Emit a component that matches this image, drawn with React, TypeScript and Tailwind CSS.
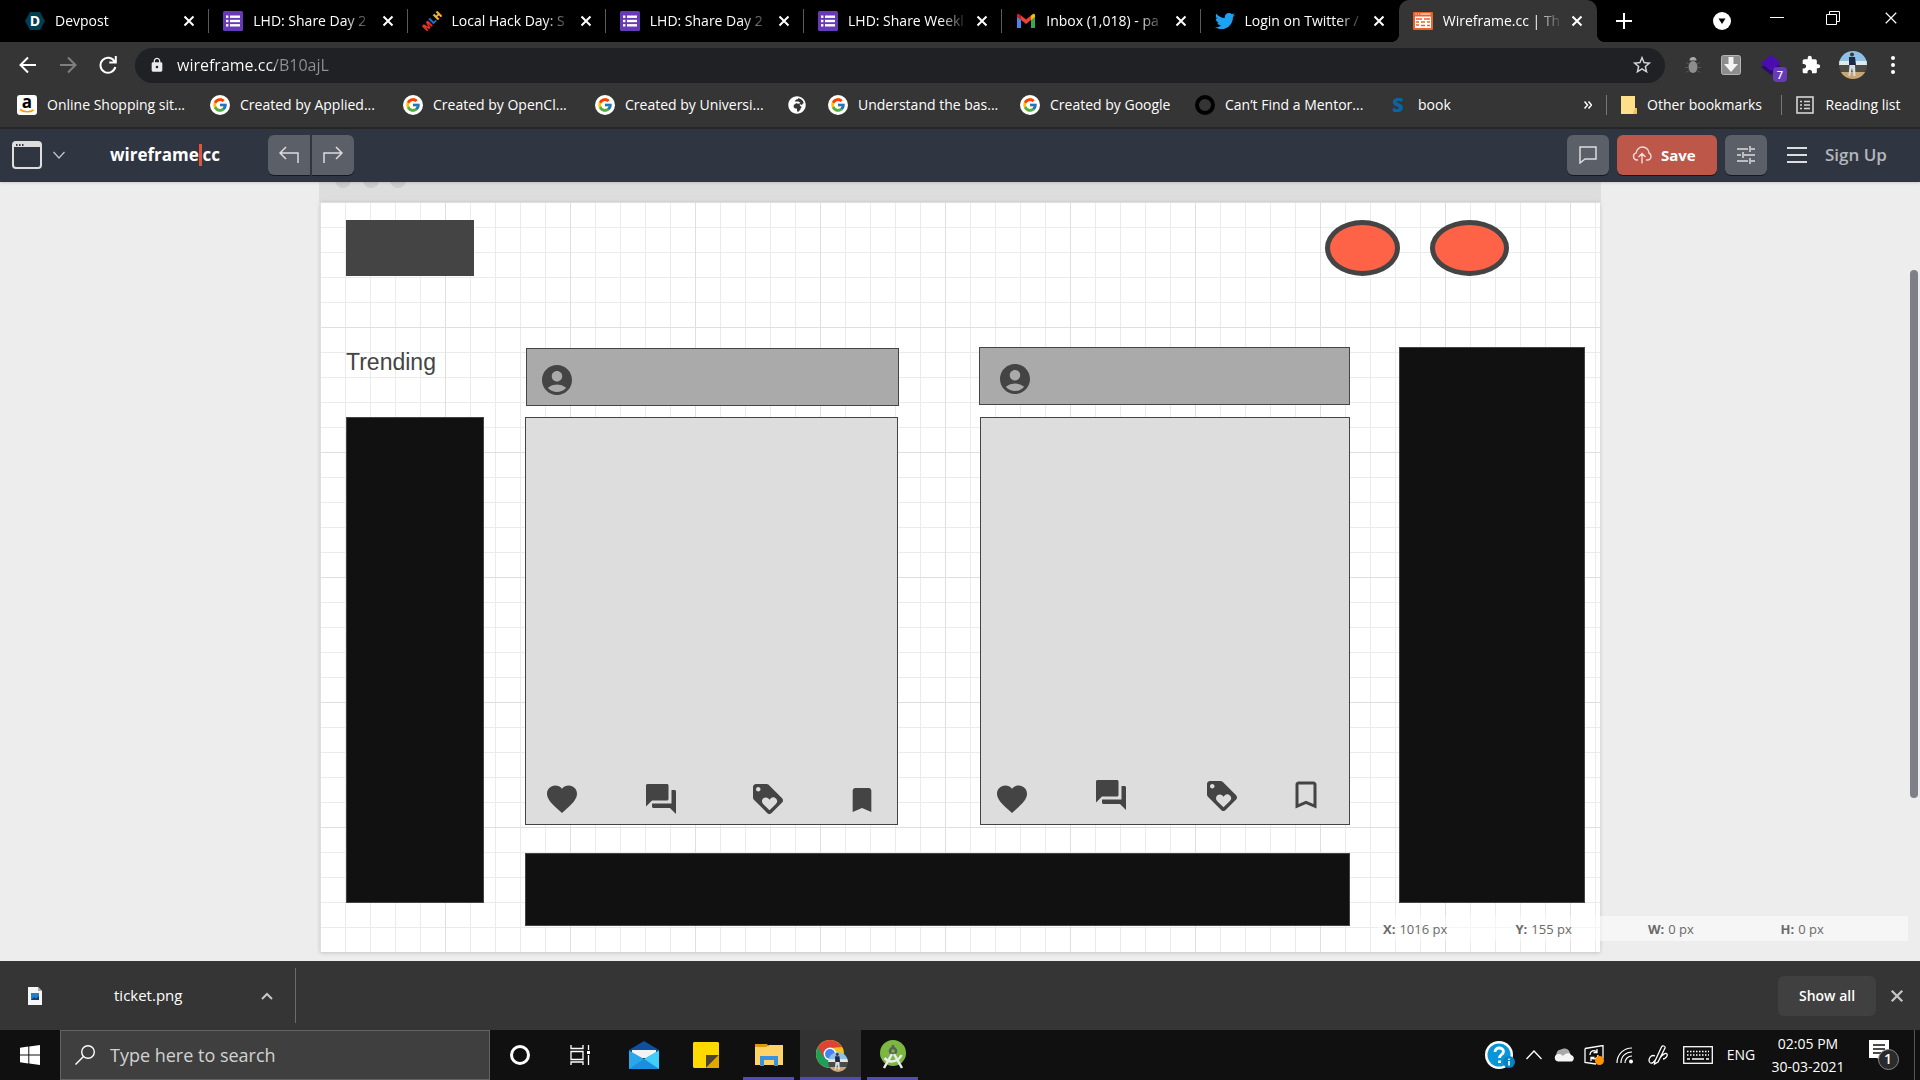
import type { ReactNode } from "react";
import { FcGoogle } from "react-icons/fc";
import { FaGlobeAfrica, FaTwitter } from "react-icons/fa";
import {
  MdAccountCircle,
  MdBookmark,
  MdBookmarkBorder,
  MdExtension,
  MdFavorite,
  MdForum,
  MdLock,
  MdLoyalty,
  MdStarBorder,
} from "react-icons/md";

/* ---------- favicons ---------- */

function DevpostIcon() {
  return (
    <svg viewBox="0 0 20 20" className="size-5">
      <path d="M5 1h10l5 9-5 9H5l-5-9z" fill="#003e54" />
      <text x="10" y="15" textAnchor="middle" fontSize="14" fontWeight="700" fill="#fff" fontFamily="Open Sans, sans-serif">
        D
      </text>
    </svg>
  );
}

function FormsIcon() {
  return (
    <svg viewBox="0 0 20 20" className="size-5">
      <rect width="20" height="20" rx="1.5" fill="#673ab7" />
      <g fill="#fff">
        <rect x="3" y="4.5" width="2.4" height="2.4" />
        <rect x="3" y="8.8" width="2.4" height="2.4" />
        <rect x="3" y="13.1" width="2.4" height="2.4" />
        <rect x="7" y="4.5" width="10" height="2.4" />
        <rect x="7" y="8.8" width="10" height="2.4" />
        <rect x="7" y="13.1" width="10" height="2.4" />
      </g>
    </svg>
  );
}

function MlhIcon() {
  return (
    <svg viewBox="0 0 20 20" className="size-5">
      <text
        x="10"
        y="13.5"
        textAnchor="middle"
        fontSize="10"
        fontWeight="800"
        fontFamily="Open Sans, sans-serif"
        transform="rotate(-45 10 10)"
      >
        <tspan fill="#e73427">M</tspan>
        <tspan fill="#1d6fcf">L</tspan>
        <tspan fill="#f8b92a">H</tspan>
      </text>
    </svg>
  );
}

function GmailIcon() {
  return (
    <svg viewBox="0 0 20 20" className="size-5">
      <path d="M1 17V5l4 3v9z" fill="#4285f4" />
      <path d="M15 17V8l4-3v12z" fill="#34a853" />
      <path d="M15 4.500 17 3c1-.6 2 0 2 1.200V6l-4 3z" fill="#fbbc04" />
      <path d="M5 4.500 3 3C2 2.400 1 3 1 4.200V6l4 3z" fill="#c5221f" />
      <path d="m5 4.500 5 4 5-4V9l-5 4-5-4z" fill="#ea4335" />
    </svg>
  );
}

function WireframeIcon() {
  return (
    <svg viewBox="0 0 20 20" className="size-5">
      <rect y="1" width="20" height="18" rx="1" fill="#e8632c" />
      <path d="M2.500 3h1.200M5 3h1.200M7.500 3h10" stroke="#fff" />
      <rect x="2" y="5.500" width="16" height="11.500" fill="#fff" />
      <path d="M3 8h6M3 11h3M3 14h3M11 8h6M8 11h4M8 14.500h4M14 11h3M14 14.500h3" stroke="#e8632c" strokeWidth="1.300" />
    </svg>
  );
}

function AmazonIcon() {
  return (
    <svg viewBox="0 0 20 20" className="size-5">
      <rect width="20" height="20" rx="3" fill="#fff" />
      <text x="10" y="13" textAnchor="middle" fontSize="17" fontWeight="700" fill="#000" fontFamily="Open Sans, sans-serif">
        a
      </text>
      <path d="M3 14.500c4 3 10 3 13.500.5" fill="none" stroke="#f90" strokeWidth="1.600" />
    </svg>
  );
}

function GoogleIcon() {
  return (
    <span className="flex size-5 items-center justify-center rounded-full bg-white">
      <FcGoogle className="size-4" />
    </span>
  );
}

function RingIcon() {
  return <span className="block size-5 rounded-full border-4 border-black" />;
}

function BookIcon() {
  return (
    <svg viewBox="0 0 20 20" className="size-5">
      <text x="10" y="17" textAnchor="middle" fontSize="20" fontWeight="800" fill="#0a64a4" fontFamily="Open Sans, sans-serif">
        S
      </text>
    </svg>
  );
}

function Cross({ className }: { className: string }) {
  return (
    <svg viewBox="0 0 12 12" className={className} stroke="currentColor" fill="none">
      <path d="m1.500 1.500 9 9M10.500 1.500l-9 9" />
    </svg>
  );
}

/* ---------- browser chrome ---------- */

type Tab = { title: string; icon: ReactNode; active?: boolean; divider?: boolean };

const tabs: Tab[] = [
  { title: "Devpost", icon: <DevpostIcon />, divider: true },
  { title: "LHD: Share Day 2", icon: <FormsIcon />, divider: true },
  { title: "Local Hack Day: S", icon: <MlhIcon />, divider: true },
  { title: "LHD: Share Day 2", icon: <FormsIcon />, divider: true },
  { title: "LHD: Share Weekl", icon: <FormsIcon />, divider: true },
  { title: "Inbox (1,018) - pa", icon: <GmailIcon />, divider: true },
  { title: "Login on Twitter /", icon: <FaTwitter className="size-5 text-[#1da1f2]" /> },
  { title: "Wireframe.cc | Th", icon: <WireframeIcon />, active: true },
];

function TabItem({ title, icon, active, divider }: Tab) {
  return (
    <div
      className={
        active
          ? "relative flex min-w-0 flex-1 items-center rounded-t-[10px] bg-[#353535] pr-3.5 pl-3.5"
          : "relative flex min-w-0 flex-1 items-center pr-3.5 pl-3.5"
      }
    >
      {active && (
        <>
          <span className="absolute bottom-0 -left-2 size-2 bg-[radial-gradient(circle_at_0_0,transparent_8px,#353535_8px)]" />
          <span className="absolute -right-2 bottom-0 size-2 bg-[radial-gradient(circle_at_100%_0,transparent_8px,#353535_8px)]" />
        </>
      )}
      <a href="#" className="flex min-w-0 flex-1 items-center gap-2.5">
        <span className="shrink-0">{icon}</span>
        <span className="flex-1 whitespace-nowrap [mask-image:linear-gradient(90deg,#000_92px,transparent_120px)]">
          {title}
        </span>
      </a>
      <button aria-label={`Close ${title}`} className="ml-2 shrink-0">
        <Cross className="size-3 stroke-2" />
      </button>
      {divider && <span className="absolute right-0 h-6 w-px bg-[#5a5a5a]" />}
    </div>
  );
}

function TabStrip() {
  return (
    <div className="flex h-[42px] bg-black pl-[11px] text-sm text-white">
      <div className="flex w-[1586px] min-w-0">
        {tabs.map((t, i) => (
          <TabItem key={i} {...t} />
        ))}
      </div>
      <button aria-label="New tab" className="ml-[19px]">
        <svg viewBox="0 0 16 16" className="size-4 stroke-white stroke-2">
          <path d="M8 0v16M0 8h16" />
        </svg>
      </button>
      <div className="ml-auto flex items-center pr-[22px] pb-1.5">
        <button aria-label="Search tabs" className="mt-1.5 mr-[39px]">
          <svg viewBox="0 0 18 18" className="size-[18px]">
            <circle cx="9" cy="9" r="9" fill="#fff" />
            <path d="M5.500 6.500h7L9 12z" fill="#000" />
          </svg>
        </button>
        <button aria-label="Minimize" className="mr-[42px]">
          <svg viewBox="0 0 14 14" className="size-3.5 stroke-white">
            <path d="M0 6.500h14" />
          </svg>
        </button>
        <button aria-label="Restore" className="mr-11">
          <svg viewBox="0 0 14 14" className="size-3.5 fill-none stroke-white">
            <path d="M.5 3.500h10v10H.5zM3.500 3V.5h10v10H11" />
          </svg>
        </button>
        <button aria-label="Close window">
          <Cross className="size-3.5" />
        </button>
      </div>
    </div>
  );
}

function AvatarPhoto({ className }: { className: string }) {
  return (
    <svg viewBox="0 0 28 28" className={className}>
      <clipPath id="avatar-clip">
        <circle cx="14" cy="14" r="14" />
      </clipPath>
      <g clipPath="url(#avatar-clip)">
        <rect width="28" height="12" fill="#8fc1e6" />
        <rect y="10" width="28" height="5" fill="#dfe9ea" />
        <rect y="14" width="28" height="8" fill="#4c4a44" />
        <rect y="21" width="28" height="7" fill="#c9a574" />
        <circle cx="13" cy="3.500" r="2" fill="#4b3428" />
        <path d="M10 6h6l1 8h-7z" fill="#1e2a44" />
        <path d="M10.500 14h5.500l.5 11h-2l-1.500-8-2 8h-1.500z" fill="#d7dbe4" />
      </g>
    </svg>
  );
}

function AddressRow() {
  return (
    <div className="flex h-[46px] items-center pl-[19px] pr-[25px] text-white">
      <button aria-label="Back">
        <svg viewBox="0 0 18 18" className="size-[18px] fill-none stroke-white stroke-2">
          <path d="M17 9H2M9 1.500 1.500 9 9 16.500" />
        </svg>
      </button>
      <button aria-label="Forward" className="ml-[22px]">
        <svg viewBox="0 0 18 18" className="size-[18px] fill-none stroke-[#7f7f7f] stroke-2">
          <path d="M1 9h15M9 1.500l7.500 7.500L9 16.500" />
        </svg>
      </button>
      <button aria-label="Reload" className="ml-[22px]">
        <svg viewBox="0 0 18 18" className="size-[18px] fill-none stroke-white stroke-2">
          <path d="M15.500 5.500A7.500 7.500 0 1 0 16.300 11M16.800 0v6.500h-6.500" />
        </svg>
      </button>
      <div className="ml-[18px] flex h-[35px] flex-1 items-center rounded-full bg-[#202124] pr-3 pl-3.5">
        <MdLock className="size-4 text-[#e8eaed]" />
        <input
          aria-label="Address"
          defaultValue="wireframe.cc/B10ajL"
          className="ml-3 min-w-0 flex-1 bg-[linear-gradient(90deg,#fff_98px,#8e9195_98px)] bg-clip-text text-base text-transparent outline-none"
        />
        <button aria-label="Bookmark this page">
          <MdStarBorder className="size-[22px] text-[#d5d6d8]" />
        </button>
      </div>
      <div className="ml-5 flex items-center gap-5">
        <button aria-label="Bug extension">
          <svg viewBox="0 0 16 18" className="h-[18px] w-4">
            <path d="M4.500 4.500a3.500 3.500 0 0 1 7 0z" fill="#aaa" />
            <ellipse cx="8" cy="11" rx="4.500" ry="6" fill="#8d8d8d" />
            <path d="M1 6.500 4 8M15 6.500 12 8M0 11.500h3.500M16 11.500h-3.500M1 16.500l3-2M15 16.500l-3-2" stroke="#555" />
          </svg>
        </button>
        <button aria-label="Download extension">
          <svg viewBox="0 0 20 20" className="size-5">
            <rect x=".5" y=".5" width="19" height="19" rx="2" fill="#8d8d8d" stroke="#b5b5b5" />
            <path d="M7.500 2h5v7H17l-7 8-7-8h4.500z" fill="#f4f4f4" />
          </svg>
        </button>
        <button aria-label="Layers extension" className="relative">
          <svg viewBox="0 0 20 20" className="size-5">
            <path d="M0 12 10 20l10-8-10-6z" fill="#2c0a6b" />
            <path d="m10 0 10 8-10 8L0 8z" fill="#4b0cb0" />
          </svg>
          <span className="absolute top-3 left-3 flex h-[15px] w-3.5 items-center justify-center rounded-sm bg-[#673ab7] text-[11px] leading-none font-semibold">
            7
          </span>
        </button>
        <button aria-label="Extensions">
          <MdExtension className="size-5" />
        </button>
        <button aria-label="Profile" className="-ml-0.5">
          <AvatarPhoto className="size-7" />
        </button>
      </div>
      <button aria-label="Menu" className="ml-6">
        <svg viewBox="0 0 4 18" className="h-[18px] w-1 fill-white">
          <circle cx="2" cy="2" r="2" />
          <circle cx="2" cy="9" r="2" />
          <circle cx="2" cy="16" r="2" />
        </svg>
      </button>
    </div>
  );
}

const bookmarks: { label: string; icon: ReactNode; width: string }[] = [
  { label: "Online Shopping sit...", icon: <AmazonIcon />, width: "w-[193px]" },
  { label: "Created by Applied...", icon: <GoogleIcon />, width: "w-[193px]" },
  { label: "Created by OpenCl...", icon: <GoogleIcon />, width: "w-[192px]" },
  { label: "Created by Universi...", icon: <GoogleIcon />, width: "w-[193px]" },
  { label: "", icon: <FaGlobeAfrica className="size-[18px]" />, width: "w-10" },
  { label: "Understand the bas...", icon: <GoogleIcon />, width: "w-[192px]" },
  { label: "Created by Google", icon: <GoogleIcon />, width: "w-[175px]" },
  { label: "Can’t Find a Mentor...", icon: <RingIcon />, width: "w-[193px]" },
  { label: "book", icon: <BookIcon />, width: "w-20" },
];

function BookmarkBar() {
  return (
    <div className="flex h-[39px] items-center pb-1.5 pl-[17px] pr-[18px] text-sm whitespace-nowrap text-white">
      {bookmarks.map((b, i) => (
        <a key={i} href="#" aria-label={b.label || "Website"} className={`flex items-center gap-2.5 ${b.width}`}>
          {b.icon}
          {b.label && <span>{b.label}</span>}
        </a>
      ))}
      <button aria-label="More bookmarks" className="ml-auto">
        <svg viewBox="0 0 8 8" className="size-2 fill-none stroke-white stroke-[1.5]">
          <path d="m.5.500 3 3.500-3 3.500M4.500.500l3 3.500-3 3.500" />
        </svg>
      </button>
      <span className="ml-3.5 h-5 w-px bg-[#777]" />
      <a href="#" className="ml-3.5 flex items-center gap-2.5">
        <svg viewBox="0 0 16 18" className="h-[18px] w-4">
          <path d="M0 0h14v12h2v6H0z" fill="#ffe08a" />
          <path d="M14 12h2v6h-4z" fill="#f2c14e" />
        </svg>
        <span className="w-[118px]">Other bookmarks</span>
      </a>
      <span className="ml-4 h-5 w-px bg-[#777]" />
      <button className="ml-3.5 flex items-center gap-2.5">
        <svg viewBox="0 0 18 18" className="size-[18px] fill-none stroke-[#d5d5d5] stroke-[1.6]">
          <rect x="1" y="1" width="16" height="16" />
          <path d="M4 5.500h2M4 9h2M4 12.500h2M8 5.500h6M8 9h6M8 12.500h6" />
        </svg>
        <span className="w-[78px]">Reading list</span>
      </button>
    </div>
  );
}

/* ---------- wireframe editor ---------- */

function EditorToolbar() {
  return (
    <header className="relative z-10 flex h-[53px] items-center bg-[#303641] px-3 pb-px text-[#d6d7d9] shadow">
      <button aria-label="Browser template" className="flex items-center gap-[11px]">
        <svg viewBox="0 0 30 28" className="h-7 w-[30px] fill-none stroke-[#dedede] stroke-2">
          <rect x="1" y="1" width="28" height="26" rx="3" />
          <path d="M1 2h28v4H1z" fill="#dedede" stroke="none" />
          <path d="M4 4h1.500M7 4h1.500M10 4h1.500" stroke="#303641" />
        </svg>
        <svg viewBox="0 0 12 8" className="h-2 w-3 fill-none stroke-[#c0c2c5] stroke-[1.3]">
          <path d="m.5 1 5.500 6L11.500 1" />
        </svg>
      </button>
      <a href="#" className="ml-[45px] flex w-[110px] items-center text-[17px] font-bold text-white">
        wireframe<span className="mr-px h-[22px] w-[3px] bg-[#e0533d]" />cc
      </a>
      <div className="ml-12 flex gap-0.5">
        <button aria-label="Undo" className="flex h-10 w-[42px] items-center justify-center rounded-l-md bg-[#5b5f68] shadow-[0_1px_0_#15181d]">
          <svg viewBox="0 0 20 18" className="h-[18px] w-5 fill-none stroke-[#dcdddf] stroke-[1.5]">
            <path d="M7 1 1 7l6 6M1 7h18v10" />
          </svg>
        </button>
        <button aria-label="Redo" className="flex h-10 w-[42px] items-center justify-center rounded-r-md bg-[#5b5f68] shadow-[0_1px_0_#15181d]">
          <svg viewBox="0 0 20 18" className="h-[18px] w-5 fill-none stroke-[#dcdddf] stroke-[1.5]">
            <path d="m13 1 6 6-6 6M19 7H1v10" />
          </svg>
        </button>
      </div>
      <div className="ml-auto flex items-center gap-2">
        <button aria-label="Comments" className="flex h-10 w-[42px] items-center justify-center rounded-md bg-[#5b5f68] shadow-[0_1px_0_#15181d]">
          <svg viewBox="0 0 18 18" className="size-[18px] fill-none stroke-[#dcdddf] stroke-[1.5]">
            <path d="M1 1h16v12H6l-5 4z" />
          </svg>
        </button>
        <button className="flex h-10 w-[100px] items-center gap-[9px] rounded-md bg-[#bc574a] pl-[15px] text-[15px] font-bold text-white shadow-[0_1px_0_#15181d]">
          <svg viewBox="0 0 20 18" className="h-[18px] w-5 fill-none stroke-[#f3dcd9] stroke-[1.4]">
            <path d="M6 14H4.500a3.700 3.700 0 0 1-.3-7.200C4.500 3.500 7.200 1 10.500 1 14 1 17 3.600 17 7c1.500.7 2 2 2 3.300 0 2-1.500 3.700-3.500 3.700H14M10 17.500V7.500M6.500 11 10 7.500l3.500 3.500" />
          </svg>
          Save
        </button>
        <button aria-label="Settings" className="flex h-10 w-[42px] items-center justify-center rounded-md bg-[#5b5f68] shadow-[0_1px_0_#15181d]">
          <svg viewBox="0 0 18 18" className="size-[18px] fill-none stroke-[#dcdddf] stroke-[1.5]">
            <path d="M0 3h11M14 3h4M13 0v6M0 9h4M7 9h11M6 6v6M0 15h11M14 15h4M13 12v6" />
          </svg>
        </button>
      </div>
      <button aria-label="Open menu" className="ml-5">
        <svg viewBox="0 0 20 16" className="h-4 w-5 stroke-[#dcdddf] stroke-2">
          <path d="M0 1h20M0 8h20M0 15h20" />
        </svg>
      </button>
      <a href="#" className="mr-[17px] ml-[18px] w-[66px] text-[17px] font-semibold whitespace-nowrap text-[#b5b7bb]">
        Sign Up
      </a>
    </header>
  );
}

/* Shapes sit at free positions on the 1280px drawing sheet. */
function Sheet() {
  return (
    <div className="absolute inset-x-0 top-0 mx-auto w-[1282px]">
      <div className="relative h-5 overflow-hidden bg-[#ddd]">
        <span className="absolute -top-2.5 left-4 size-4 rounded-full bg-[#ccc]" />
        <span className="absolute -top-2.5 left-11 size-4 rounded-full bg-[#ccc]" />
        <span className="absolute -top-2.5 left-[71px] size-4 rounded-full bg-[#ccc]" />
      </div>
      <div className="relative mx-px h-[750px] bg-white bg-[linear-gradient(90deg,#dfdfdf_1px,transparent_1px),linear-gradient(#dfdfdf_1px,transparent_1px),linear-gradient(90deg,#ebebeb_1px,transparent_1px),linear-gradient(#ebebeb_1px,transparent_1px)] bg-[size:125px_125px,125px_125px,25px_25px,25px_25px] text-[#444] shadow-[0_1px_4px_rgba(0,0,0,0.18)]">
        <div className="absolute top-[18px] left-[26px] h-14 w-32 bg-[#444]" />
        <div className="absolute top-[18px] left-[1005px] h-14 w-[75px] rounded-[50%] border-[5px] border-[#444] bg-[#ff6347]" />
        <div className="absolute top-[18px] left-[1110px] h-14 w-[79px] rounded-[50%] border-[5px] border-[#444] bg-[#ff6347]" />

        <p className="absolute top-[146px] left-[26px] font-['Liberation_Sans',Arial,sans-serif] text-[23px] leading-7">Trending</p>
        <div className="absolute top-[215px] left-[26px] h-[486px] w-[138px] border border-[#444] bg-[#111]" />

        <div className="absolute top-[146px] left-[206px] h-[58px] w-[373px] border border-[#444] bg-[#aaa]" />
        <MdAccountCircle className="absolute top-40 left-[219px] size-9" />
        <div className="absolute top-[215px] left-[205px] h-[408px] w-[373px] border border-[#444] bg-[#ddd]" />
        <MdFavorite className="absolute top-[579px] left-[224px] size-9" />
        <MdForum className="absolute top-[579px] left-[323px] size-9" />
        <MdLoyalty className="absolute top-[579px] left-[430px] size-9" />
        <MdBookmark className="absolute top-[582px] left-[526px] size-8" />

        <div className="absolute top-[145px] left-[659px] h-[58px] w-[371px] border border-[#444] bg-[#aaa]" />
        <MdAccountCircle className="absolute top-[159px] left-[677px] size-9" />
        <div className="absolute top-[215px] left-[660px] h-[408px] w-[370px] border border-[#444] bg-[#ddd]" />
        <MdFavorite className="absolute top-[579px] left-[674px] size-9" />
        <MdForum className="absolute top-[575px] left-[773px] size-9" />
        <MdLoyalty className="absolute top-[576px] left-[884px] size-9" />
        <MdBookmarkBorder className="absolute top-[575px] left-[968px] size-9" />

        <div className="absolute top-[145px] left-[1079px] h-[556px] w-[186px] border border-[#444] bg-[#111]" />
        <div className="absolute top-[651px] left-[205px] h-[73px] w-[825px] border border-[#444] bg-[#111]" />
      </div>
    </div>
  );
}

const readouts = [
  ["X:", "1016 px"],
  ["Y:", "155 px"],
  ["W:", "0 px"],
  ["H:", "0 px"],
];

function Editor() {
  return (
    <main className="relative h-[779px] overflow-hidden bg-[#ededed]">
      <Sheet />
      <dl className="absolute right-3 bottom-5 grid h-[25px] w-[530px] grid-cols-4 items-center bg-white/50 pt-[3px] text-[13px] text-[#6a6a6a]">
        {readouts.map(([k, v]) => (
          <div key={k} className="flex gap-1 pl-[5px]">
            <dt className="font-bold">{k}</dt>
            <dd>{v}</dd>
          </div>
        ))}
      </dl>
      <div className="absolute top-[88px] right-0.5 h-[528px] w-2 rounded-full bg-[#7f8087]" />
    </main>
  );
}

/* ---------- downloads shelf and taskbar ---------- */

function DownloadShelf() {
  return (
    <div className="flex h-[69px] items-center bg-[#353535] pr-4 pl-7 text-white">
      <button className="flex items-center text-[15px]">
        <svg viewBox="0 0 14 18" className="h-[18px] w-3.5">
          <path d="M0 0h10l4 4v14H0z" fill="#f6f6f6" />
          <path d="M10 0v4h4z" fill="#a5a5a5" />
          <rect x="3" y="6" width="8" height="7" fill="#1f7fd0" />
          <path d="m3 13 3-3 2 1.500L11 9v4z" fill="#123c7c" />
        </svg>
        <span className="ml-[72px] w-[71px] text-left">ticket.png</span>
      </button>
      <button aria-label="Download options" className="ml-[76px]">
        <svg viewBox="0 0 12 8" className="h-2 w-3 fill-none stroke-[#c8c8c8] stroke-2">
          <path d="m1 7 5-5 5 5" />
        </svg>
      </button>
      <span className="ml-[22px] h-[55px] w-px bg-[#6b6b6b]" />
      <button className="ml-auto h-10 w-[98px] rounded-md bg-[#404040] text-sm font-semibold">Show all</button>
      <button aria-label="Close downloads" className="ml-3.5 text-[#c4c4c4]">
        <Cross className="size-3.5 stroke-2" />
      </button>
    </div>
  );
}

function TaskbarApps() {
  return (
    <div className="flex h-full items-stretch">
      <button aria-label="Cortana" className="flex w-[60px] items-center justify-center">
        <span className="size-5 rounded-full border-[3px] border-white" />
      </button>
      <button aria-label="Task view" className="flex w-[60px] items-center justify-center">
        <svg viewBox="0 0 20 20" className="size-5 fill-none stroke-white stroke-[1.3]">
          <path d="M1 0v3.500h12V0M1 6.500h12v8H1zM1 20v-3h12v3M18.500 0v5M18.500 10v10" />
          <path d="M17 6h3v3h-3z" fill="#fff" stroke="none" />
        </svg>
      </button>
      <button aria-label="Mail" className="ml-[3px] flex w-[62px] items-center justify-center">
        <svg viewBox="0 0 30 28" className="h-7 w-[30px]">
          <path d="M0 9 15 0l15 9v6H0z" fill="#0f4fa0" />
          <path d="M3 9h24v8H3z" fill="#f3f3f3" />
          <path d="M0 9.500 15 18l15-8.500V28H0z" fill="#2aa7ea" />
          <path d="M30 9.500V28L15 18z" fill="#43cdfa" />
          <path d="M0 28h30L15 18z" fill="#1b8fdd" />
        </svg>
      </button>
      <button aria-label="Sticky notes" className="flex w-[61px] items-center justify-center">
        <svg viewBox="0 0 26 26" className="size-[26px]">
          <path d="M1 0h24l1 1v24l-1 1H1l-1-1V1z" fill="#ffd900" />
          <path d="M13 13h13L13 26z" fill="#4b4432" />
          <path d="M26 13v13H13z" fill="#e2a800" />
        </svg>
      </button>
      <button aria-label="File explorer" className="ml-[7px] flex w-[51px] items-center justify-center border-b-[3px] border-[#544bb3] pt-[3px]">
        <svg viewBox="0 0 28 24" className="h-6 w-7">
          <path d="M0 1h12l2 3v18H0z" fill="#dc9a08" />
          <path d="M0 4h11l3-2h14v20H0z" fill="#ffd367" />
          <path d="M5 13h18v10h-4v-6H9v6H5z" fill="#3793de" />
        </svg>
      </button>
      <button aria-label="Chrome" className="ml-1.5 flex w-[61px] items-center justify-center border-b-[3px] border-[#544bb3] bg-[#323232] pt-[3px]">
        <span className="relative block size-[30px]">
          <svg viewBox="0 0 28 28" className="size-7">
            <circle cx="14" cy="14" r="14" fill="#fbc116" />
            <path d="M14 14 1.900 7A14 14 0 0 0 14 28l6-10.500z" fill="#1e9e58" />
            <path d="M1.900 7A14 14 0 0 1 26.100 7L14 8v6L8 17z" fill="#dc4437" />
            <circle cx="14" cy="14" r="6.400" fill="#fff" />
            <circle cx="14" cy="14" r="5" fill="#4285f4" />
          </svg>
          <AvatarPhoto className="absolute -right-0.5 -bottom-0.5 size-5" />
        </span>
      </button>
      <button aria-label="Android Studio" className="ml-1.5 flex w-[51px] items-center justify-center border-b-[3px] border-[#544bb3] pt-[3px]">
        <svg viewBox="0 0 28 30" className="h-[30px] w-7">
          <circle cx="14" cy="13" r="13" fill="#7cb83f" />
          <circle cx="14" cy="11" r="3" fill="none" stroke="#56615b" strokeWidth="2.500" />
          <path d="M14 5v3" stroke="#56615b" strokeWidth="2.500" />
          <path d="M13 14 5 28M15 14l8 14M5.500 18c4 5 13 5 17-3" fill="none" stroke="#e9edf0" strokeWidth="2.500" />
        </svg>
      </button>
    </div>
  );
}

function Tray() {
  return (
    <div className="ml-auto flex h-full items-center text-white">
      <button aria-label="Help">
        <svg viewBox="0 0 30 28" className="h-7 w-[30px]">
          <circle cx="14" cy="14" r="14" fill="#fff" />
          <circle cx="14" cy="14" r="11.500" fill="#0a95d8" />
          <path d="M10 11c0-5.500 8.500-5 8.500-.5 0 3-4 3-4 6.500M14.500 19.500v2.500" fill="none" stroke="#fff" strokeWidth="2.800" />
          <circle cx="24" cy="21" r="6" fill="#0a80c4" />
          <path d="M24 17.500v1.500M24 20v4.500" stroke="#fff" strokeWidth="1.600" />
        </svg>
      </button>
      <button aria-label="Show hidden icons" className="ml-[11px]">
        <svg viewBox="0 0 16 10" className="h-2.5 w-4 fill-none stroke-white stroke-[1.3]">
          <path d="m.5 9 7.500-8 7.500 8" />
        </svg>
      </button>
      <button aria-label="OneDrive" className="ml-3">
        <svg viewBox="0 0 20 14" className="h-3.5 w-5">
          <path d="M3 9a5 5 0 0 1 4-7.500C11-1 16 1.500 16 6l-8 5z" fill="#a9a9a9" />
          <path d="M4 13.500A3.800 3.800 0 0 1 4 6c3-.5 4 1 5 2 1-1.500 6-4.500 8-1 3 .5 4 4.500 1 6.500z" fill="#f5f5f5" />
        </svg>
      </button>
      <button aria-label="Updates" className="ml-2.5">
        <svg viewBox="0 0 20 20" className="size-5 fill-none stroke-white stroke-[1.3]">
          <path d="M1 3.500 19 .5v13M1 3.500v14l11 1.500M6 10a4 4 0 0 1 7-3M13 4v3.500H9.500M14 10a4 4 0 0 1-7 2.500M7 16v-3.500h3.500" />
          <circle cx="15.500" cy="15.500" r="4.500" fill="#ff9500" stroke="none" />
        </svg>
      </button>
      <button aria-label="Network" className="ml-3">
        <svg viewBox="0 0 18 18" className="size-[18px] fill-none stroke-white stroke-[1.2]">
          <path d="M1 17C1 8 8 2 16 2M5 17C5 10 10 6 16 6M9 17c0-4 3-7 7-7" />
          <circle cx="15" cy="15.500" r="2" fill="#fff" stroke="none" />
        </svg>
      </button>
      <button aria-label="Pen" className="ml-3.5">
        <svg viewBox="0 0 20 20" className="size-5 fill-none stroke-white stroke-[1.3]">
          <path d="m7 16 6.500-14c1-2 4-1 3.500 1L10 17l-3.500 2zM7 11c-4-2-7 3-5.500 6 2 3 5 0 7-4M12 13c2-3 6-6 7-4s-2 5-4 5" />
        </svg>
      </button>
      <button aria-label="Touch keyboard" className="ml-[15px]">
        <svg viewBox="0 0 30 18" className="h-[18px] w-[30px] fill-none stroke-white stroke-[1.3]">
          <rect x=".7" y=".7" width="28.600" height="16.600" />
          <path d="M4 5.500h22M4 9h22" strokeDasharray="1.500 1.500" />
          <path d="M4 13h3M9 13h12M23 13h3" />
        </svg>
      </button>
      <button className="ml-[13px] w-[30px] text-sm">ENG</button>
      <button className="ml-2.5 flex w-[84px] flex-col items-center text-sm leading-[23px] whitespace-nowrap">
        <span>02:05 PM</span>
        <span>30-03-2021</span>
      </button>
      <button aria-label="Notifications" className="relative ml-[19px] h-[30px] w-[30px]">
        <svg viewBox="0 0 30 30" className="size-[30px]">
          <path d="M0 0h20v18h-8v3l-4-3H0z" fill="#fff" />
          <path d="M4 5h12M4 9h12M4 13h8" stroke="#111" strokeWidth="1.300" />
          <circle cx="19.500" cy="19.500" r="10" fill="#2b2b2b" stroke="#888" />
        </svg>
        <span className="absolute top-[9px] left-[15px] text-sm font-semibold">1</span>
      </button>
      <span className="ml-[15px] h-full w-px bg-[#555]" />
      <span className="w-[5px]" />
    </div>
  );
}

function Taskbar() {
  return (
    <footer className="flex h-[50px] items-center bg-[#101010]">
      <button aria-label="Start" className="flex w-[60px] justify-center">
        <svg viewBox="0 0 20 20" className="size-5 fill-white">
          <path d="M0 2.800 8.300 1.600V9.500H0zM9.300 1.500 20 0v9.500H9.300zM0 10.500h8.300v7.900L0 17.200zM9.300 10.500H20V20L9.300 18.500z" />
        </svg>
      </button>
      <label className="flex h-full w-[430px] items-center border border-[#636363] bg-[#3f3f3f] pl-3.5">
        <svg viewBox="0 0 20 20" className="size-5 fill-none stroke-white stroke-[1.4]">
          <circle cx="13" cy="7" r="6.300" />
          <path d="M8.500 11.500.5 19.500" />
        </svg>
        <input
          aria-label="Search"
          placeholder="Type here to search"
          className="ml-[15px] min-w-0 flex-1 bg-transparent text-lg outline-none placeholder:text-[#d2d2d2]"
        />
      </label>
      <TaskbarApps />
      <Tray />
    </footer>
  );
}

export default function App() {
  return (
    <div className="min-h-screen overflow-hidden bg-[#353535] font-['Open_Sans','Noto_Sans',sans-serif]">
      <TabStrip />
      <AddressRow />
      <BookmarkBar />
      <div className="h-0.5 bg-[#262626]" />
      <EditorToolbar />
      <Editor />
      <DownloadShelf />
      <Taskbar />
    </div>
  );
}
